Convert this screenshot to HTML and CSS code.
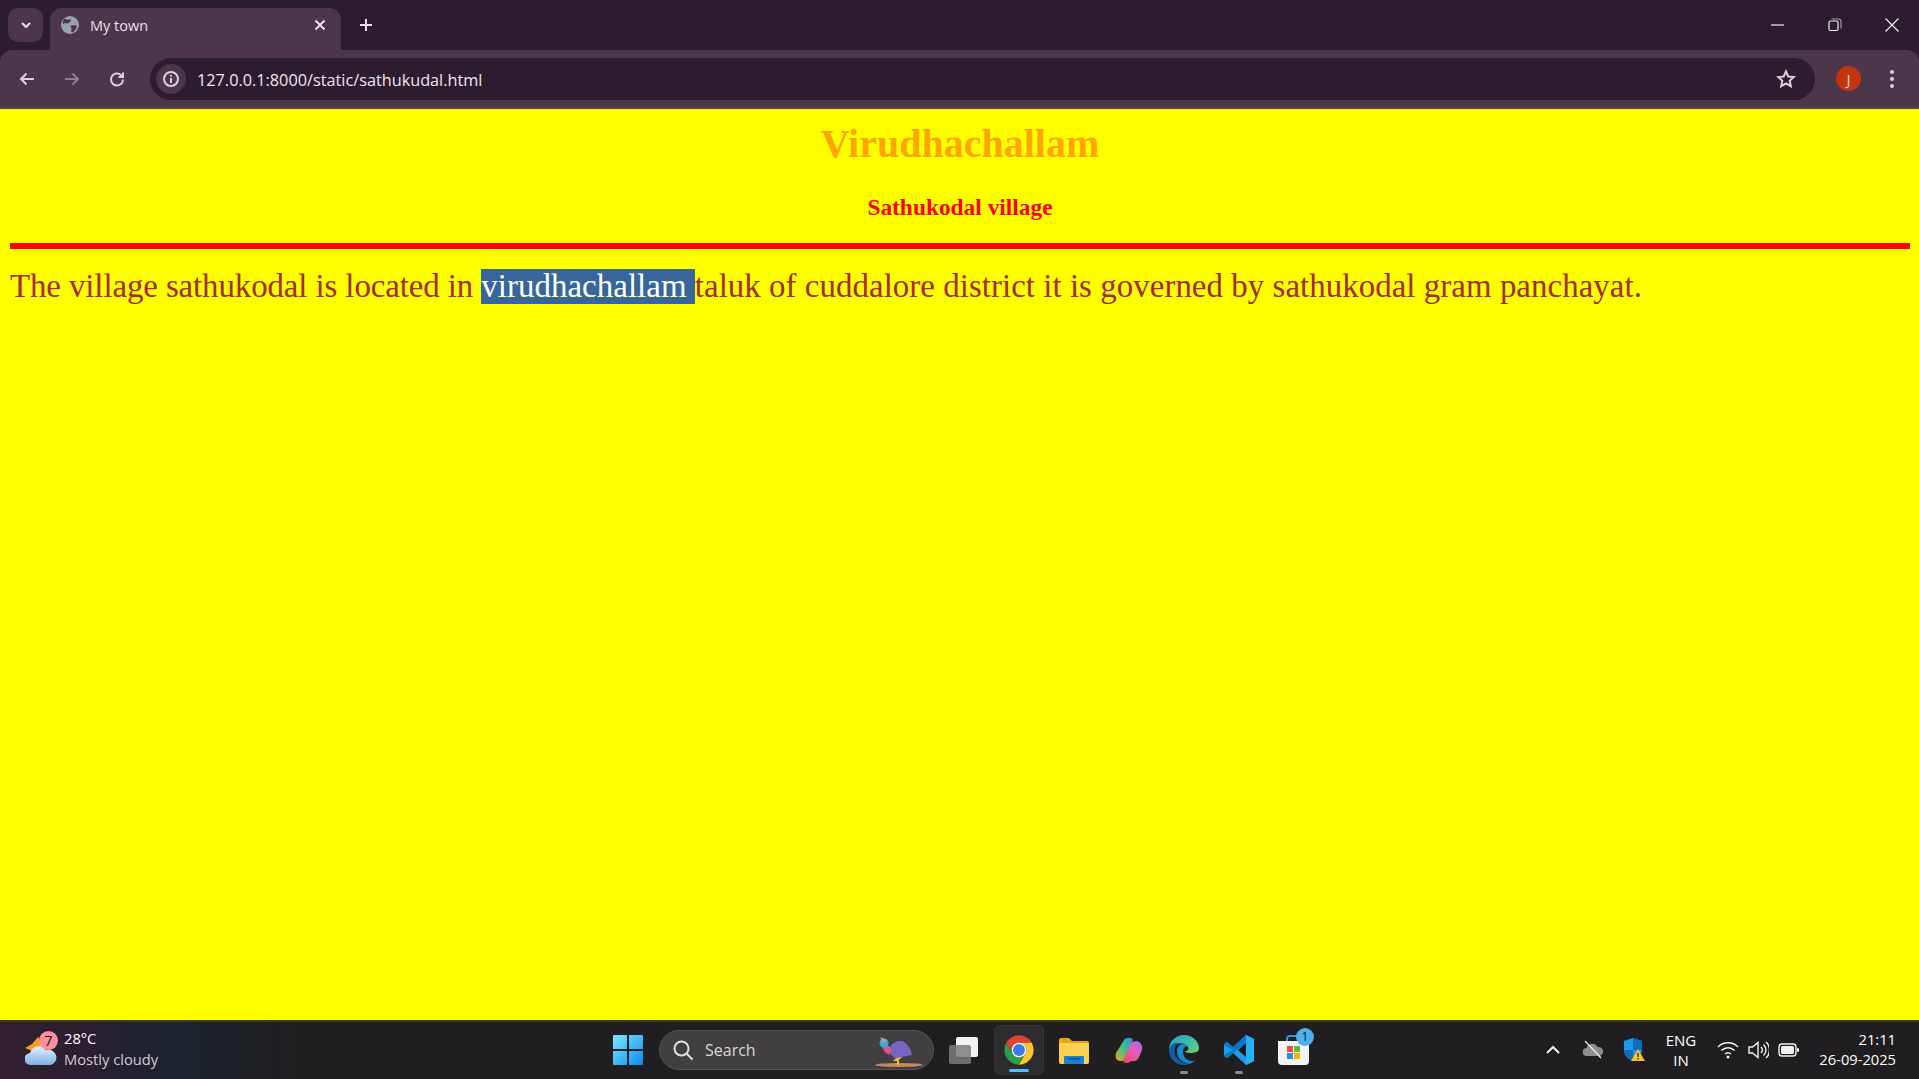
FILE: index.html
```html
<!DOCTYPE html>
<html lang="en">
<head>
<meta charset="utf-8">
<title>My town</title>
<link rel="stylesheet" href="styles.css">
</head>
<body>
<div class="app">
  <header class="chrome">
    <div class="tabstrip">
      <button class="tabmenu"><svg width="14" height="14" viewBox="0 0 14 14"><path d="M3 5l4 4 4-4" class="st-light2"/></svg></button>
      <div class="tab">
        <svg class="globe" width="18" height="18" viewBox="0 0 18 18"><circle cx="9" cy="9" r="9" fill="#99a1ab"/><path d="M4 2.500l3 1.500 2-1 1 2-3 2.500-3-.5-2 1C1.500 6 2 4 4 2.500zM9 10l4-1 3 1-1 3-3 3.500-2-1 .5-3z" fill="#4b3749"/></svg>
        <span class="tabtitle">My town</span>
        <svg width="12" height="12" viewBox="0 0 12 12"><path d="M1.500 1.500l9 9M10.500 1.500l-9 9" class="st-light2"/></svg>
      </div>
      <svg class="newtab" width="14" height="14" viewBox="0 0 14 14"><path d="M7 1v12M1 7h12" class="st-light2"/></svg>
      <div class="winbtns">
        <svg width="14" height="14" viewBox="0 0 14 14"><path d="M0 7h13" class="st-win"/></svg>
        <svg width="14" height="14" viewBox="0 0 14 14"><rect x="1" y="3" width="9" height="9.500" rx="1.500" class="st-win"/><path d="M3.500 1h7a2.500 2.500 0 0 1 2.500 2.500v7" class="st-win2"/></svg>
        <svg width="14" height="14" viewBox="0 0 14 14"><path d="M.5.5l13 13M13.500.5l-13 13" class="st-win"/></svg>
      </div>
    </div>
    <div class="toolbar">
      <svg width="18" height="18" viewBox="0 0 18 18"><path d="M16 9H3M8.500 3.500L3 9l5.500 5.500" class="st-nav"/></svg>
      <svg class="fwd" width="18" height="18" viewBox="0 0 18 18"><path d="M2 9h13M9.500 3.500L15 9l-5.500 5.500" class="st-dim"/></svg>
      <svg class="reload" width="18" height="18" viewBox="0 0 18 18"><path d="M15 9.500a6 6 0 1 1-1.800-4.300L15 7M15 2.500V7h-4.500" class="st-nav"/></svg>
      <div class="omnibox">
        <span class="siteinfo"><svg width="18" height="18" viewBox="0 0 18 18"><circle cx="9" cy="9" r="7" class="st-nav"/><path d="M9 8v5M9 5v1.600" class="st-nav"/></svg></span>
        <span class="url">127.0.0.1:8000/static/sathukudal.html</span>
        <svg class="star" width="20" height="20" viewBox="0 0 20 20"><path d="M10 2.500l2.300 5 5.400.6-4 3.700 1.100 5.400-4.800-2.700-4.800 2.700 1.100-5.400-4-3.700 5.400-.6z" class="st-nav"/></svg>
      </div>
      <span class="avatar">J</span>
      <span class="kebab"><i></i><i></i><i></i></span>
    </div>
  </header>

  <main class="page">
    <h1 class="title">Virudhachallam</h1>
    <h3 class="subtitle">Sathukodal village</h3>
    <hr class="rule">
    <p class="body-text"><span class="lead">The village sathukodal is located in </span><span class="selected">virudhachallam </span>taluk of cuddalore district it is governed by sathukodal gram panchayat.</p>
  </main>

  <footer class="taskbar">
    <div class="tb-left">
      <span class="weather-icon">
        <svg width="32" height="34" viewBox="0 0 32 34"><defs><linearGradient id="cl" x1="0" y1="0" x2="0" y2="1"><stop offset="0" stop-color="#e4effa"/><stop offset="1" stop-color="#7fb0e6"/></linearGradient></defs><path d="M13 4l3 5 6 2-8 8-9-2-5-2 7-4z" fill="#f7a01f"/><path d="M6 32a6 6 0 0 1-1-12 9 9 0 0 1 16-3 7 7 0 0 1 5 15z" fill="url(#cl)"/></svg>
        <span class="wbadge">7</span>
      </span>
      <div class="weather-text"><div class="temp">28°C</div><div class="cond">Mostly cloudy</div></div>
    </div>
    <div class="tb-center">
      <svg class="winlogo" width="30" height="30" viewBox="0 0 30 30"><defs><linearGradient id="wl" x1="0" y1="0" x2="1" y2="1"><stop offset="0" stop-color="#7ce8ff"/><stop offset="1" stop-color="#0a8cf0"/></linearGradient></defs><path d="M1 0h13v14H0V1a1 1 0 0 1 1-1zM16 0h13a1 1 0 0 1 1 1v13H16zM0 16h14v14H1a1 1 0 0 1-1-1zM16 16h14v13a1 1 0 0 1-1 1H16z" fill="url(#wl)"/></svg>
      <div class="search">
        <svg width="22" height="22" viewBox="0 0 22 22"><circle cx="9.500" cy="9.500" r="7" class="st-search"/><path d="M14.500 14.500l6 6" class="st-search"/></svg>
        <span class="search-label">Search</span>
        <svg class="bird" width="52" height="38" viewBox="0 0 52 38"><ellipse cx="27" cy="34" rx="24" ry="2" fill="#c78a5c"/><path d="M25 26l-4 4h4v4h2v-5l3-3z" fill="#f0c020"/><path d="M17 18c2-6 10-10 15-7 4 2 7 8 8 13-6 1-10 2-14 3-5 1-8-4-9-9z" fill="#7a63c8"/><path d="M10 15c1 4 3 7 7 9l3-5-5-6z" fill="#e0558c"/><circle cx="12" cy="12" r="4.500" fill="#3aa8d8"/><path d="M8 6l7 3-4 3z" fill="#c9a27c"/></svg>
      </div>
      <div class="apps">
        <span class="app-slot"><svg width="30" height="28" viewBox="0 0 30 28"><rect x="7" y="1" width="22" height="20" rx="2" fill="#f2f2f2"/><rect x="0" y="9" width="22" height="19" rx="2" fill="#7d7d7d" fill-opacity=".85"/></svg></span>
        <span class="app-slot app-active"><svg width="32" height="32" viewBox="0 0 48 48"><path d="M24 13H43.050A22 22 0 0 0 4.950 13L14.470 29.500A11 11 0 0 1 24 13Z" fill="#e1432f"/><path d="M14.470 29.500L4.950 13A22 22 0 0 0 24 46L33.530 29.500A11 11 0 0 1 14.470 29.500Z" fill="#2f9e48"/><path d="M33.530 29.500L24 46A22 22 0 0 0 43.050 13H24A11 11 0 0 1 33.530 29.500Z" fill="#fbc52d"/><circle cx="24" cy="24" r="11" fill="#fff"/><circle cx="24" cy="24" r="9" fill="#3b7de8"/></svg><i class="ind ind-blue"></i></span>
        <span class="app-slot"><svg width="30" height="27" viewBox="0 0 30 27"><path d="M0 3a2 2 0 0 1 2-2h8l3 3h15a2 2 0 0 1 2 2v4H0z" fill="#e3a712"/><path d="M0 6h30v19a2 2 0 0 1-2 2H2a2 2 0 0 1-2-2z" fill="#fdd04e"/><rect x="5" y="19" width="20" height="8" rx="1" fill="#1c7fcf"/><rect x="9" y="21" width="12" height="1.500" fill="#0c4d8a"/></svg></span>
        <span class="app-slot"><svg width="28" height="27" viewBox="0 0 28 27"><defs><linearGradient id="cp1" x1="0" y1="1" x2="1" y2="0"><stop offset="0" stop-color="#f7a21b"/><stop offset=".5" stop-color="#3fc27f"/><stop offset="1" stop-color="#2f8df0"/></linearGradient><linearGradient id="cp2" x1="0" y1="1" x2="1" y2="0"><stop offset="0" stop-color="#f4435c"/><stop offset=".6" stop-color="#e05fc0"/><stop offset="1" stop-color="#a06bf0"/></linearGradient></defs><path d="M9 3c2-3 8-3 9 0l-6 15c-1 4-3 6-7 6C1 24 0 20 1 16z" fill="url(#cp1)"/><path d="M16 24c-2 3-8 2-8 0l6-14c1-3 4-6 7-6 4 0 7 4 6 9l-3 7c-1 3-4 5-8 4z" fill="url(#cp2)"/></svg></span>
        <span class="app-slot"><svg width="30" height="30" viewBox="0 0 30 30"><defs><linearGradient id="ed" x1="0" y1="0" x2="1" y2="1"><stop offset="0" stop-color="#1aa0e0"/><stop offset="1" stop-color="#62d96b"/></linearGradient></defs><path d="M15 0c9 0 15 7 15 13 0 4-4 5-9 5-3 0-5-1-5-2 3 0 4-2 3-4-2-4-9-5-13-2C2 13 0 17 0 15 0 7 6 0 15 0z" fill="url(#ed)"/><path d="M0 15c1-6 6-8 10-7-4 2-5 6-4 11 1 5 7 10 13 9 3-1 6-2 8-5-3 5-8 7-12 7C6 30 0 23 0 15z" fill="#0b5ea8"/><path d="M8 16c0-4 3-7 7-7 2 0 3 1 4 2-3 0-5 2-5 6 0 5 4 9 9 9 2 0 3 0 4-1-3 3-6 4-9 3-6-1-10-6-10-12z" fill="#1787d8"/></svg><i class="ind"></i></span>
        <span class="app-slot"><svg width="30" height="30" viewBox="0 0 30 30"><path d="M22 0l8 4v22l-8 4L9 18l-6 5-3-2v-12l3-2 6 5z" fill="#1f9ce8"/><path d="M22 8l-8 7 8 7z" fill="#1a1a1e"/><path d="M22 0l8 4v22l-8 4z" fill="#29aef5"/><path d="M22 0v8L3 23l-3-2V20L9 15 0 10V9l3-2 6 5z" fill="#0a78c8"/></svg><i class="ind"></i></span>
        <span class="app-slot store"><svg width="31" height="30" viewBox="0 0 31 30"><path d="M9 7V4a3 3 0 0 1 3-3h7a3 3 0 0 1 3 3v3" fill="none" stroke="#2e9be0" stroke-width="2"/><path d="M0 6h31v20a4 4 0 0 1-4 4H4a4 4 0 0 1-4-4z" fill="#f4f4f4"/><rect x="9" y="11" width="6" height="6" fill="#e8503a"/><rect x="16" y="11" width="6" height="6" fill="#6cb33f"/><rect x="9" y="18" width="6" height="6" fill="#2c8fe0"/><rect x="16" y="18" width="6" height="6" fill="#f7b500"/></svg><span class="store-badge">1</span></span>
      </div>
    </div>
    <div class="tb-right">
      <svg class="t-chev" width="16" height="10" viewBox="0 0 16 10"><path d="M2 8l6-6 6 6" class="st-tray"/></svg>
      <svg class="t-cloud" width="22" height="20" viewBox="0 0 22 20"><path d="M5 16a4 4 0 0 1-.500-8 6 6 0 0 1 11-1 4.500 4.500 0 0 1 2 9z" fill="#8d8d8d"/><path d="M3 1l16 17" stroke="#e6e6e6" stroke-width="1.500"/></svg>
      <svg class="t-shield" width="22" height="24" viewBox="0 0 22 24"><path d="M10 0l9 3v9c0 5-4 9-9 11-5-2-9-6-9-11V3z" fill="#1b9ae8"/><path d="M10 0l9 3v9H10zM1 12h9v11c-5-2-9-6-9-11z" fill="#0e6cb8"/><path d="M15 11l7 12H8z" fill="#f7c325"/><path d="M15 15v4M15 20v1.500" stroke="#222" stroke-width="1.300"/></svg>
      <div class="lang"><div>ENG</div><div>IN</div></div>
      <svg class="t-wifi" width="22" height="18" viewBox="0 0 22 18"><path d="M1 6a14 14 0 0 1 20 0M4.500 9.500a9 9 0 0 1 13 0M8 13a4.500 4.500 0 0 1 6 0" class="st-tray2"/><circle cx="11" cy="16" r="1.500" fill="#f2f2f2"/></svg>
      <svg class="t-vol" width="21" height="20" viewBox="0 0 21 20"><path d="M1 7h3.500L10 2.500v15L4.500 13H1z" class="st-tray2"/><path d="M13 7a4 4 0 0 1 0 6M15.500 4.500a7.500 7.500 0 0 1 0 11M18 2a11 11 0 0 1 0 16" class="st-tray2"/></svg>
      <svg class="t-bat" width="21" height="14" viewBox="0 0 21 14"><rect x="1" y="1" width="17" height="12" rx="3" class="st-tray2"/><rect x="3" y="3" width="13" height="8" rx="1.500" fill="#f2f2f2"/><rect x="19" y="5" width="2" height="4" rx="1" fill="#f2f2f2"/></svg>
      <div class="clock"><div>21:11</div><div>26-09-2025</div></div>
    </div>
  </footer>
</div>
</body>
</html>
```
FILE: styles.css
```css
* { box-sizing: border-box; }
html, body { margin: 0; height: 100%; overflow: hidden; }
body { font-family: "Open Sans", "Noto Sans", sans-serif; }
.app { display: grid; grid-template-rows: 109px 1fr 59px; height: 100vh; }

/* stroke helpers */
.st-light2 { fill: none; stroke: #ecdfeb; stroke-width: 2; }
.st-win { fill: none; stroke: #f2eef2; stroke-width: 1.200; }
.st-win2 { fill: none; stroke: #a79aa6; stroke-width: 1.200; }
.st-nav { fill: none; stroke: #dfcfdc; stroke-width: 2; }
.st-dim { fill: none; stroke: #8f7c8d; stroke-width: 2; }
.st-search { fill: none; stroke: #e0e0e0; stroke-width: 2; }
.st-tray { fill: none; stroke: #f2f2f2; stroke-width: 2; }
.st-tray2 { fill: none; stroke: #f2f2f2; stroke-width: 1.400; }

/* browser chrome */
.chrome { background: #2c1d2e; display: flex; flex-direction: column; }
.tabstrip { height: 50px; display: flex; align-items: flex-start; padding: 8px 0 0 8px; }
.tabmenu { width: 35px; height: 34px; border: 0; border-radius: 10px; background: #4b3749; display: flex; align-items: center; justify-content: center; padding: 0; margin-right: 7px; }
.tab { width: 291px; height: 42px; background: #4b3749; border-radius: 12px 12px 0 0; display: flex; align-items: center; padding: 0 15px 8px 11px; color: #ecdfeb; font-size: 14.500px; }
.globe { margin-right: 11px; }
.tabtitle { flex: 1; }
.newtab { margin: 10px 0 0 18px; }
.winbtns { margin-left: auto; display: flex; gap: 43px; padding: 10px 20px 0 0; }
.toolbar { height: 59px; background: #4b3749; border-radius: 12px 12px 0 0; border-bottom: 2px solid #554655; display: flex; align-items: center; padding: 0 18px; }
.fwd, .reload { margin-left: 27px; }
.omnibox { width: 1665px; height: 42px; margin-left: 24px; border-radius: 21px; background: #2c1d2e; display: flex; align-items: center; padding: 0 19px 0 6px; color: #f0e6ee; flex: none; }
.siteinfo { width: 30px; height: 30px; border-radius: 50%; background: #4b3749; display: flex; align-items: center; justify-content: center; margin-right: 11px; }
.url { flex: 1; font-size: 16.250px; padding-top: 2px; }
.avatar { width: 25px; height: 25px; margin-left: 21px; border-radius: 50%; background: #c5350d; color: #f6d9cf; font-size: 15px; display: flex; align-items: center; justify-content: center; flex: none; }
.kebab { display: flex; flex-direction: column; gap: 3px; margin-left: 29px; flex: none; }
.kebab i { width: 4px; height: 4px; border-radius: 50%; background: #dfcfdc; }

/* page */
.page { background: #ff0; padding: 0 9px 0 10px; overflow: hidden; }
.title { margin: 15px 0 0; font: bold 40px/40px "Liberation Serif", serif; color: #ffa500; text-align: center; }
.subtitle { margin: 30px 0 0; font: bold 23.400px/26px "Liberation Serif", serif; color: #f00; text-align: center; }
.rule { margin: 23px 0 0; height: 6px; border: 0; background: #f00; }
.body-text { margin: 20px 0 0; font: 32.900px/35px "Liberation Serif", serif; letter-spacing: .05px; color: #a52a2a; white-space: nowrap; }
.lead { letter-spacing: -.1px; }
.selected { display: inline-block; white-space: pre; background: #36669c; color: #fff; }

/* taskbar */
.taskbar { background: linear-gradient(90deg, #33202f 0, #2a1f30 90px, #1c242e 170px, #201e20 300px); border-top: 2px solid #3b3a35; display: grid; grid-template-columns: 613px 730px 1fr; align-items: center; color: #fff; padding-bottom: 1px; }
.tb-left { display: flex; align-items: center; padding-left: 25px; }
.weather-icon { position: relative; width: 32px; height: 34px; display: block; }
.wbadge { position: absolute; left: 14px; top: -2px; width: 19px; height: 19px; border-radius: 50%; background: #ff8f9f; color: #111; font-size: 14px; line-height: 19px; text-align: center; }
.weather-text { margin-left: 7px; padding-bottom: 3px; font-size: 14.700px; line-height: 20.500px; }
.cond { color: #cfcbcf; }
.tb-center { display: flex; align-items: center; }
.winlogo { flex: none; }
.search { width: 275px; height: 40px; margin-left: 16px; border-radius: 20px; background: #413f3f; border: 1px solid #555; display: flex; align-items: center; padding-left: 12px; color: #d8d8d8; font-size: 16px; flex: none; position: relative; }
.search-label { margin-left: 11px; }
.bird { position: absolute; right: 9px; top: 0; }
.apps { display: flex; gap: 5px; margin-left: 5px; }
.app-slot { position: relative; width: 50px; height: 50px; display: flex; align-items: center; justify-content: center; border-radius: 6px; }
.app-active { background: #2d2d2f; border: 1px solid #363638; }
.ind { position: absolute; left: 50%; bottom: 1px; width: 8px; height: 3px; margin-left: -4px; border-radius: 2px; background: #8c8c8c; }
.ind-blue { width: 20px; margin-left: -10px; background: #4cc2ff; bottom: 2px; }
.store { left: -1px; }
.store-badge { position: absolute; left: 28px; top: 3px; width: 18px; height: 18px; border-radius: 50%; background: #4db1ef; color: #111; font-size: 12px; line-height: 18px; text-align: center; }
.tb-right { display: flex; align-items: center; padding-left: 202px; }
.t-cloud { margin-left: 21px; }
.t-shield { margin-left: 19px; }
.lang { width: 50px; margin-left: 11px; text-align: center; font-size: 15px; line-height: 20px; }
.t-wifi { margin-left: 11px; }
.t-vol { margin-left: 9px; }
.t-bat { margin-left: 9px; }
.clock { margin-left: auto; padding-right: 23px; padding-bottom: 2px; text-align: right; font-size: 14.700px; line-height: 20.500px; }
```
